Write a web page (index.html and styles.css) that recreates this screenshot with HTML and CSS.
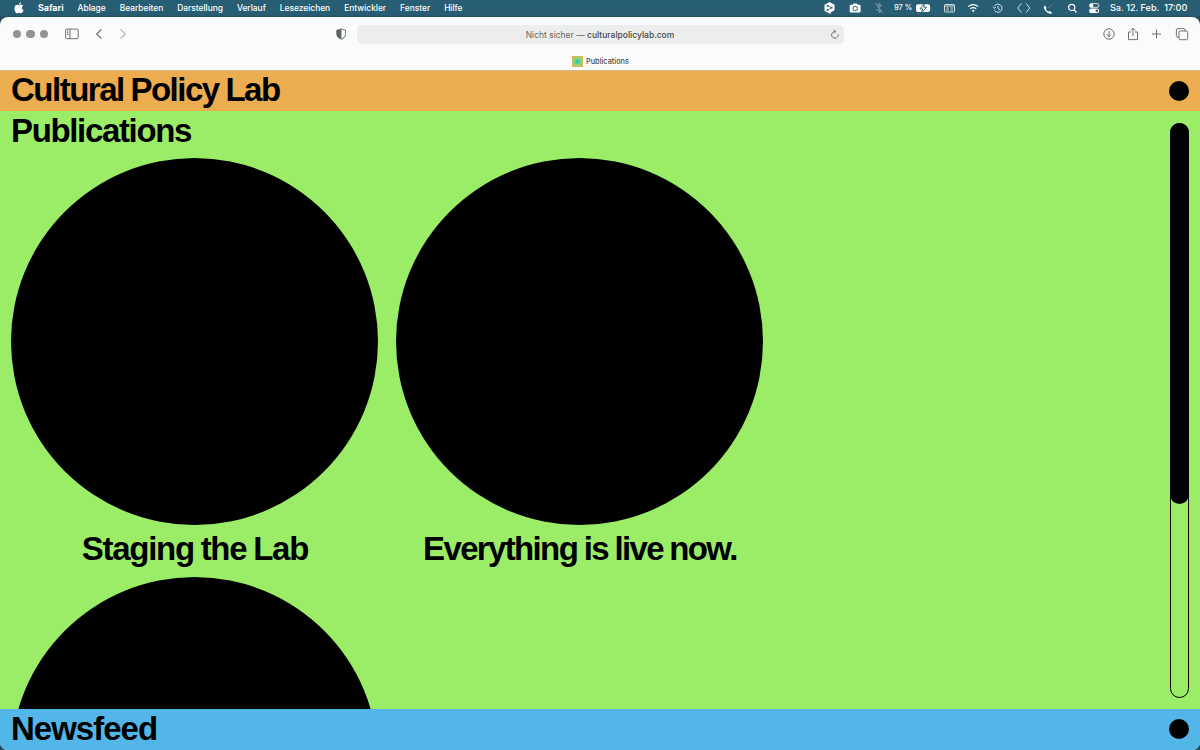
FILE: index.html
```html
<!DOCTYPE html>
<html lang="de">
<head>
<meta charset="utf-8">
<title>Publications</title>
<link rel="stylesheet" href="styles.css">
</head>
<body>
<div class="desktop">
  <header class="menubar">
    <svg class="apple" width="10" height="12" viewBox="0 0 10 12"><path d="M7.1.2C7.1 1.6 6 2.6 4.9 2.7 4.8 1.5 5.900.4 7.100.2ZM5.100 3.300C5.700 3.300 6.200 2.700 7.200 2.700 8.100 2.700 8.800 3.200 9.200 3.800 7.300 4.900 7.700 7.500 9.600 8.200 9 9.700 8.100 11.300 7.100 11.300 6.300 11.300 6 10.800 5.100 10.800 4.200 10.800 3.900 11.300 3.100 11.300 1.800 11.300.4 8.800.4 6.500.4 4.100 1.800 2.800 3.200 2.800 4.100 2.800 4.600 3.300 5.100 3.300Z"/></svg>
    <nav class="menus">
      <b class="m-safari">Safari</b><span>Ablage</span><span>Bearbeiten</span><span>Darstellung</span><span>Verlauf</span><span>Lesezeichen</span><span>Entwickler</span><span>Fenster</span><span>Hilfe</span>
    </nav>
    <div class="status">
      <svg viewBox="0 0 16 12"><path d="M8.500 0 13.500 2.800V8.300L9.800 10.300V12L7.800 11.200 3.500 8.700V2.800Z" fill="#fff"/><path d="M6.700 3.600 10.700 5.700 6.700 8" fill="none" stroke="#285d74" stroke-width=".7"/><g fill="#285d74"><circle cx="6.600" cy="3.700" r="1"/><circle cx="10.600" cy="5.700" r="1"/><circle cx="6.600" cy="8" r="1"/></g></svg>
      <svg viewBox="0 0 16 12"><path d="M3.700 2.700H5.500L6.500 1.500H9.800L10.800 2.700H12.500Q13.600 2.700 13.600 3.700V9.500Q13.600 10.500 12.500 10.500H3.700Q2.700 10.500 2.700 9.500V3.700Q2.700 2.700 3.700 2.700Z" fill="#fff"/><circle cx="8.200" cy="6.500" r="2.200" fill="none" stroke="#285d74"/></svg>
      <svg viewBox="0 0 16 12" class="line dim"><path d="M4.500 1 11.500 11M8 1.500V5M8 7V10.500L10 9M8 1.500 10.300 3.500 8.500 5.200M7 7 5.500 8.500"/></svg>
      <span class="percent">97 %</span>
      <svg viewBox="0 0 16 12"><rect x="0" y="2.300" width="14" height="7.600" rx="1.800" fill="#fff"/><path d="M14.700 4.800Q16 6.200 14.700 7.600Z" fill="#fff" opacity=".6"/><path d="M8.600 1 4 6.900H6.600L5.500 11 10.500 5.200H7.700Z" fill="#fff" stroke="#285d74" stroke-width=".9"/></svg>
      <svg viewBox="0 0 16 12" class="line"><rect x="3.500" y="2.500" width="10" height="7.500" rx="1"/><path d="M3.500 4H13.500M5.200 6H7.800M9.400 6H12M5.200 8H7.800M9.400 8H12"/></svg>
      <svg viewBox="0 0 16 12" class="line wifi"><path d="M3.200 4.600Q8.200.7 13.200 4.600M5.100 6.900Q8.200 4.500 11.300 6.900"/><path d="M6.700 8.500Q8.200 7.300 9.700 8.500L8.200 10.300Z" fill="#fff" stroke="none"/></svg>
      <svg viewBox="0 0 16 12" class="line"><path d="M4.300 4.200A4.100 4.100 0 1 1 4.300 8.200M8 3.800V6.500L10 7.800M3.200 4.700 4.500 6.500 6 5"/></svg>
      <svg viewBox="0 0 16 12" class="line"><path d="M5.700 3 2 7.500 5.700 12M10.300 3 14 7.500 10.300 12" transform="translate(.8 -1.500)"/></svg>
      <svg viewBox="0 0 16 12"><path d="M4.200 4Q3.200 5.500 5.200 8.500 8.500 12.500 11.300 11.700L12 10.800 9.700 9 8.500 9.800Q6.500 8.800 5.800 7L6.500 6 5.200 3.700Z" fill="#fff"/><path d="M8 6 12.500 2" stroke="#718f9c" stroke-width=".7"/></svg>
      <svg viewBox="0 0 16 12" class="line search"><circle cx="7.700" cy="5.400" r="3.100"/><path d="M10 7.800 12.500 10.500"/></svg>
      <svg viewBox="0 0 16 12"><rect x="3.500" y="1.600" width="9.400" height="3.800" rx="1.900" fill="none" stroke="#fff" stroke-width=".8"/><circle cx="5.400" cy="3.500" r="1.900" fill="#fff"/><rect x="3.100" y="6.600" width="10" height="4.500" rx="2.200" fill="#fff"/><circle cx="10.800" cy="8.800" r="1.300" fill="#285d74"/></svg>
      <span class="clock">Sa. 12. Feb.&nbsp; 17:00</span>
    </div>
  </header>
  <main class="window">
    <div class="toolbar">
      <div class="tools-left">
        <i class="light"></i><i class="light"></i><i class="light"></i>
        <svg class="sidebar-icon" width="14" height="12" viewBox="0 0 14 12"><rect x=".6" y="1.100" width="12.600" height="9.600" rx="1.200"/><path d="M4.900 1V10.700M1.900 3H3.500M1.900 4.700H3.500M1.900 6.400H3.500"/></svg>
        <svg class="back" width="8" height="12" viewBox="0 0 8 12"><path d="M6.400 1.300 1.700 6 6.400 10.700"/></svg>
        <svg class="forward" width="8" height="12" viewBox="0 0 8 12"><path d="M1.600 1.300 6.300 6 1.600 10.700"/></svg>
      </div>
      <svg class="shield" width="10" height="12" viewBox="0 0 10 12"><path d="M5.200 .8Q7.500 2 9.600 2.200V6.800Q9.300 9.500 5.200 11.200 1.100 9.500.8 6.800V2.200Q3 2 5.200 .8Z"/><path d="M5.400 .8V11.200Q1.100 9.500.8 6.800V2.200Q3 2 5.400 .8Z" fill="#606263" stroke="none"/></svg>
      <div class="address"><span class="url">Nicht sicher — <span>culturalpolicylab.com</span></span>
        <svg width="10" height="11" viewBox="0 0 10 11"><path d="M8.100 5.200A3.300 3.300 0 1 1 5.200 2.600M3.800.8 5.700 2.600 4 4.300"/></svg>
      </div>
      <div class="tools-right">
        <svg viewBox="0 0 14 14"><circle cx="7" cy="7" r="5.200"/><path d="M7 4.200V9.500M4.900 7.500 7 9.600 9.100 7.500"/></svg>
        <svg viewBox="0 0 14 14"><path d="M5 5H2.500V12.600H11.500V5H9M7 9V1.200M4.800 3.300 7 1.100 9.200 3.300"/></svg>
        <svg viewBox="0 0 14 14"><path d="M6.500 2.500V11.500M2 7H11"/></svg>
        <svg viewBox="0 0 14 14"><rect x="4" y="4" width="8.700" height="8.700" rx="1.300"/><path d="M4 10H2.700Q1.400 10 1.400 8.700V2.900Q1.400 1.600 2.700 1.600H8.700Q10 1.600 10 2.900V4"/></svg>
      </div>
    </div>
    <div class="tab"><i class="favicon"></i><span>Publications</span></div>
    <section class="bar orange"><h1 class="t-lab">Cultural Policy Lab</h1><i class="dot"></i></section>
    <section class="content">
      <div class="catalog">
        <h2 class="t-pub">Publications</h2>
        <div class="works">
          <article><div class="disc"></div><h3 class="t-staging">Staging the Lab</h3></article>
          <article><div class="disc"></div><h3 class="t-live">Everything is live now.</h3></article>
          <article><div class="disc"></div></article>
        </div>
      </div>
      <div class="scroll"><div class="thumb"></div></div>
    </section>
    <section class="bar blue"><h2 class="t-news">Newsfeed</h2><i class="dot"></i></section>
  </main>
</div>
</body>
</html>
```
FILE: styles.css
```css
* { box-sizing: border-box; }
body { margin: 0; font-family: Inter, "Liberation Sans", sans-serif; }
.desktop { width: 1200px; height: 750px; overflow: hidden; background: #254b5a; display: flex; flex-direction: column; }
.menubar { height: 16.500px; flex: none; background: linear-gradient(#285e74 85%, #28505f); display: flex; align-items: flex-start; color: #fff; font-size: 8.400px; line-height: 16px; }
.apple { margin: 2px 14px 0 14px; flex: none; fill: #fff; }
.menus { display: flex; gap: 14px; flex: 1; font-weight: 500; white-space: nowrap; }
.m-safari { font-size: 8.900px; }
.status { display: grid; flex: none; width: 379px; grid-template-columns: 26px 24px 23px 22px 25px 24px 25px 25px 25px 24px 22px 24px 90px; align-items: center; height: 16px; white-space: nowrap; font-weight: 500; }
.status svg { width: 16px; height: 12px; }
.percent { font-size: 7.500px; }
.clock { font-size: 9.100px; }
.line { fill: none; stroke: #fff; stroke-width: .8; }
.dim { stroke: #b9cbd2; stroke-width: .65; }
.wifi, .search { stroke-width: 1.200; }
.window { flex: 1; min-height: 0; border-radius: 8px; overflow: hidden; display: flex; flex-direction: column; background: #fafcfb; }
.toolbar { height: 35.500px; display: flex; align-items: center; flex: none; }
.tools-left { width: 336px; display: flex; align-items: center; padding-left: 13px; }
.light { width: 8.400px; height: 8.400px; border-radius: 50%; background: #929493; margin-right: 5px; }
.sidebar-icon, .back, .forward, .shield, .address svg, .tools-right svg { fill: none; stroke: #686a6b; stroke-width: .95; flex: none; }
.sidebar-icon { margin-left: 12px; }
.back { margin-left: 16px; stroke-width: 1.200; }
.forward { margin-left: 16px; stroke: #b4b6b6; stroke-width: 1.200; }
.address { width: 487px; height: 19px; margin-left: 10.500px; border-radius: 5px; background: #eceeed; display: flex; align-items: center; padding-right: 4px; font-size: 8.500px; color: #666; }
.url { flex: 1; text-align: center; padding: 1px 0 0 14px; }
.url span { color: #454747; font-weight: 500; }
.tools-right { display: flex; gap: 10.400px; margin-left: 258px; }
.tools-right svg { width: 14px; height: 14px; }
.tab { height: 19px; flex: none; display: flex; align-items: center; justify-content: center; gap: 3px; padding: 1px 0 0 1px; font-size: 7.350px; font-weight: 500; color: #4b4d4d; border-bottom: 1px solid #d0b98c; }
.favicon { width: 11px; height: 11px; background: radial-gradient(circle, #3cc6b5 15%, #94d86b 48%, #e0b052 80%); }
.bar { flex: none; display: flex; justify-content: space-between; padding: 0 11px; }
.orange { height: 40px; background: #ebad4f; }
.blue { height: 41px; background: #52b6e8; }
h1, h2, h3 { margin: 0; font-family: "Liberation Sans", Arial, sans-serif; font-size: 33px; font-weight: 700; line-height: 39px; white-space: nowrap; letter-spacing: -1px; word-spacing: -1px; color: #000; }
.t-lab { letter-spacing: -1.490px; line-height: 37px; }
.t-pub { letter-spacing: -1.350px; }
.t-staging { letter-spacing: -1.280px; }
.t-live { letter-spacing: -1.650px; }
.dot { width: 20px; height: 20px; border-radius: 50%; background: #000; margin-top: 10px; }
.content { height: 598px; flex: none; overflow: hidden; background: #9bed67; display: flex; justify-content: space-between; padding: 0 11px; }
.works { display: grid; grid-template-columns: 367px 367px; column-gap: 18px; padding: 7.500px 0 0 .4px; }
.disc { width: 367px; height: 367px; border-radius: 50%; background: #000; }
article { height: 419.500px; text-align: center; }
h3 { line-height: 48px; }
.scroll { width: 19px; height: 575px; margin-top: 12px; border: 1.300px solid #000; border-radius: 10px; }
.thumb { width: 19px; height: 381px; margin: -1px; border-radius: 10px; background: #000; }
```
